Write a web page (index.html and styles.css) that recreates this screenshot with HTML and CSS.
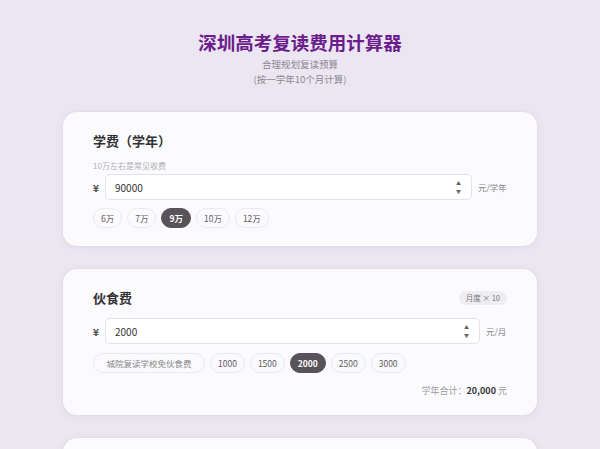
FILE: index.html
```html
<!DOCTYPE html>
<html lang="zh">
<head>
<meta charset="utf-8">
<title>深圳高考复读费用计算器</title>
<link rel="stylesheet" href="styles.css">
</head>
<body>
<div class="page">
  <header class="header">
    <h1 class="title">深圳高考复读费用计算器</h1>
    <p class="sub">合理规划复读预算</p>
    <p class="sub">(按一学年10个月计算)</p>
  </header>

  <section class="card">
    <div class="card-head">
      <h2 class="card-title">学费（学年）</h2>
    </div>
    <p class="hint">10万左右是常见收费</p>
    <div class="input-row">
      <span class="cur">¥</span>
      <div class="input"><span class="val">90000</span><span class="spin"><i>▲</i><i>▼</i></span></div>
      <span class="unit">元/学年</span>
    </div>
    <div class="chips">
      <span class="chip">6万</span>
      <span class="chip">7万</span>
      <span class="chip active">9万</span>
      <span class="chip">10万</span>
      <span class="chip">12万</span>
    </div>
  </section>

  <section class="card">
    <div class="card-head">
      <h2 class="card-title">伙食费</h2>
      <span class="badge">月度 × 10</span>
    </div>
    <div class="input-row row2">
      <span class="cur">¥</span>
      <div class="input"><span class="val">2000</span><span class="spin"><i>▲</i><i>▼</i></span></div>
      <span class="unit">元/月</span>
    </div>
    <div class="chips">
      <span class="chip wide">城院复读学校免伙食费</span>
      <span class="chip">1000</span>
      <span class="chip">1500</span>
      <span class="chip active">2000</span>
      <span class="chip">2500</span>
      <span class="chip">3000</span>
    </div>
    <div class="total">学年合计：<b>20,000</b> 元</div>
  </section>

  <section class="card card3"></section>
</div>
</body>
</html>
```

FILE: styles.css
```css
* { box-sizing: border-box; margin: 0; padding: 0; }
html, body { height: 100%; }
body {
  font-family: "Noto Sans CJK SC", "Noto Sans", sans-serif;
  background: linear-gradient(180deg, #ece6f3 0%, #ebe6ef 100%);
  overflow: hidden;
  color: #333;
}
.page {
  width: 474px;
  margin: 0 auto;
  padding-top: 28px;
}
.header { text-align: center; margin-bottom: 25px; }
.title {
  font-size: 18.5px;
  line-height: 28px;
  font-weight: 700;
  color: #6c1d8c;
  margin-bottom: 1px;
}
.sub {
  font-size: 9.5px;
  line-height: 15px;
  color: #8a8690;
}
.card {
  background: #fbfafd;
  border-radius: 14px;
  padding: 18px 30px 18px 30px;
  margin-bottom: 23px;
  box-shadow: 0 1px 8px rgba(120, 100, 140, 0.08), 0 0 0 1px rgba(120, 100, 140, 0.03);
}
.card-head {
  display: flex;
  align-items: center;
  justify-content: space-between;
  height: 22px;
}
.card-title {
  font-size: 13px;
  line-height: 22px;
  font-weight: 700;
  color: #333;
}
.badge {
  font-size: 7.5px;
  line-height: 14px;
  padding: 0 7px;
  background: #efedf1;
  color: #777;
  border-radius: 8px;
}
.hint {
  font-size: 8px;
  line-height: 12px;
  color: #b3b0b6;
  margin-top: 8px;
}
.input-row {
  display: flex;
  align-items: center;
  margin-top: 2px;
}
.input-row.row2 { margin-top: 9px; }
.cur {
  width: 12px;
  font-size: 10px;
  color: #444;
  font-weight: 700;
}
.input {
  flex: 1;
  height: 26px;
  background: #fff;
  border: 1px solid #e4e2e7;
  border-radius: 5px;
  display: flex;
  align-items: center;
  justify-content: space-between;
  padding: 0 10px 0 9px;
}
.val { font-size: 10px; color: #333; }
.spin {
  display: flex;
  flex-direction: column;
  font-size: 5px;
  line-height: 8px;
  color: #666;
}
.spin i { font-style: normal; }
.unit {
  width: 35px;
  padding-left: 6px;
  font-size: 8.5px;
  color: #888;
  white-space: nowrap;
}
.row2 .unit { width: 27px; }
.chips {
  display: flex;
  gap: 5px;
  margin-top: 8px;
}
.row2 + .chips { margin-top: 9px; }
.chip {
  height: 20px;
  padding: 0 7px;
  border: 1px solid #eceaef;
  background: #fbfafd;
  border-radius: 10px;
  font-size: 8.5px;
  line-height: 18px;
  color: #5f5c63;
}
.chip.wide { padding: 0 12.5px; color: #888; }
.chip.active {
  background: #58535a;
  border-color: #58535a;
  color: #fff;
  font-weight: 700;
}
.total {
  text-align: right;
  font-size: 9px;
  line-height: 16px;
  color: #999;
  margin-top: 10px;
  margin-bottom: -2px;
}
.total b { color: #333; font-weight: 700; }
.card3 { height: 60px; }
```
